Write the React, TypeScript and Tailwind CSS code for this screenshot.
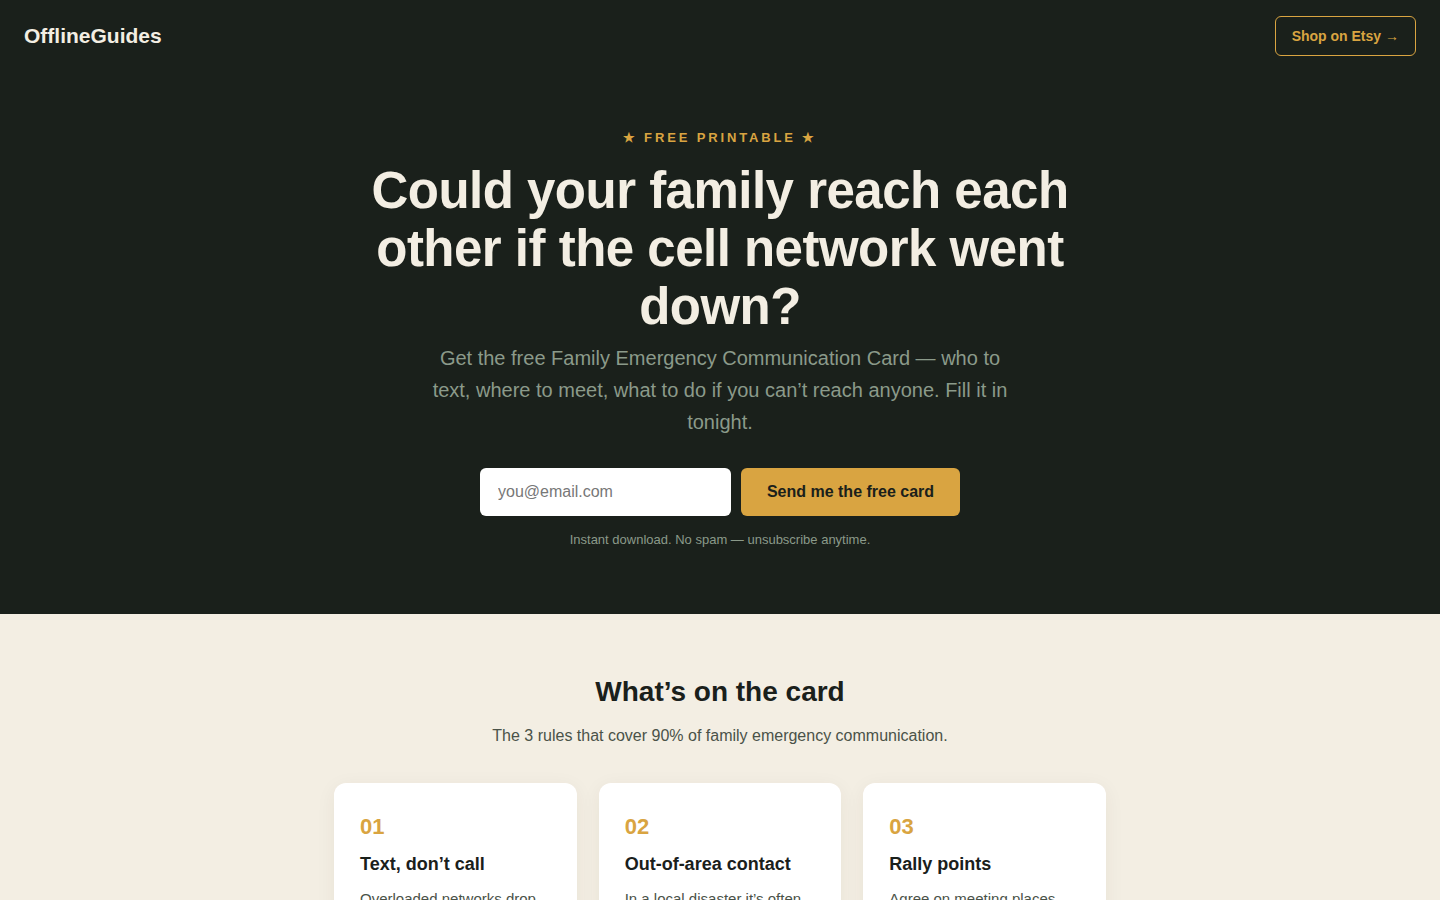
import React from 'react';

interface Rule {
  num: string;
  title: string;
  body: string;
}

const rules: Rule[] = [
  {
    num: '01',
    title: 'Text, don’t call',
    body: 'Overloaded networks drop calls first. A short text often gets through when voice can’t.',
  },
  {
    num: '02',
    title: 'Out-of-area contact',
    body: 'In a local disaster it’s often easier to reach someone far away. Pick one relative everyone checks in with.',
  },
  {
    num: '03',
    title: 'Rally points',
    body: 'Agree on meeting places near home and outside the neighborhood, so nobody has to guess.',
  },
];

const App: React.FC = () => {
  return (
    <div className="min-h-screen bg-[#f3eee3] font-['Liberation_Sans',Arial,sans-serif]">
      {/* Hero */}
      <section className="bg-[#1a201b]">
        <header className="flex items-center justify-between px-6 py-4">
          <span className="text-[21px] font-bold text-[#f3eee3]">OfflineGuides</span>
          <a
            href="#"
            className="flex h-10 items-center rounded-md border border-[#d9a441] px-4 text-[14px] font-bold text-[#d9a441]"
          >
            Shop on Etsy →
          </a>
        </header>

        <div className="flex flex-col items-center px-6 pt-[56px] pb-[64px] text-center">
          <p className="text-[13px] font-bold leading-5 tracking-[0.22em] text-[#d9a441]">
            ★ FREE PRINTABLE ★
          </p>
          <h1 className="mt-[14px] max-w-[720px] text-[51px] font-bold leading-[58px] tracking-[-0.01em] text-[#f3eee3]">
            Could your family reach each other if the cell network went down?
          </h1>
          <p className="mt-[6px] max-w-[590px] text-[20px] leading-8 text-[#8b9a8a]">
            Get the free Family Emergency Communication Card — who to text, where to meet, what to do if you can’t reach anyone. Fill it in tonight.
          </p>
          <form className="mt-[30px] flex gap-[10px]" onSubmit={(e) => e.preventDefault()}>
            <input
              type="email"
              placeholder="you@email.com"
              className="h-12 w-[251px] rounded-md bg-white px-[18px] text-[16px] text-[#1a201b] placeholder:text-[#777] outline-none"
            />
            <button
              type="submit"
              className="h-12 w-[219px] rounded-md bg-[#d9a441] text-[16px] font-bold text-[#1a201b]"
            >
              Send me the free card
            </button>
          </form>
          <p className="mt-[14px] text-[13px] leading-5 text-[#8b9a8a]">
            Instant download. No spam — unsubscribe anytime.
          </p>
        </div>
      </section>

      {/* What's on the card */}
      <section className="flex flex-col items-center px-6 pt-[60px] pb-16 text-center">
        <h2 className="text-[28px] font-bold leading-9 text-[#1a201b]">What’s on the card</h2>
        <p className="mt-[14px] text-[16px] leading-6 text-[#4a5248]">
          The 3 rules that cover 90% of family emergency communication.
        </p>

        <div className="mt-[35px] grid w-[772px] grid-cols-3 gap-[22px] text-left">
          {rules.map((rule) => (
            <div
              key={rule.num}
              className="rounded-xl bg-white px-[26px] pt-[30px] pb-7 shadow-[0_4px_20px_rgba(60,50,20,0.06)]"
            >
              <div className="text-[22px] font-bold leading-7 text-[#d9a441]">{rule.num}</div>
              <h3 className="mt-[10px] text-[18px] font-bold leading-[26px] text-[#1a201b]">{rule.title}</h3>
              <p className="mt-[10px] text-[15px] leading-6 text-[#4a5248]">{rule.body}</p>
            </div>
          ))}
        </div>
      </section>
    </div>
  );
};

export default App;
